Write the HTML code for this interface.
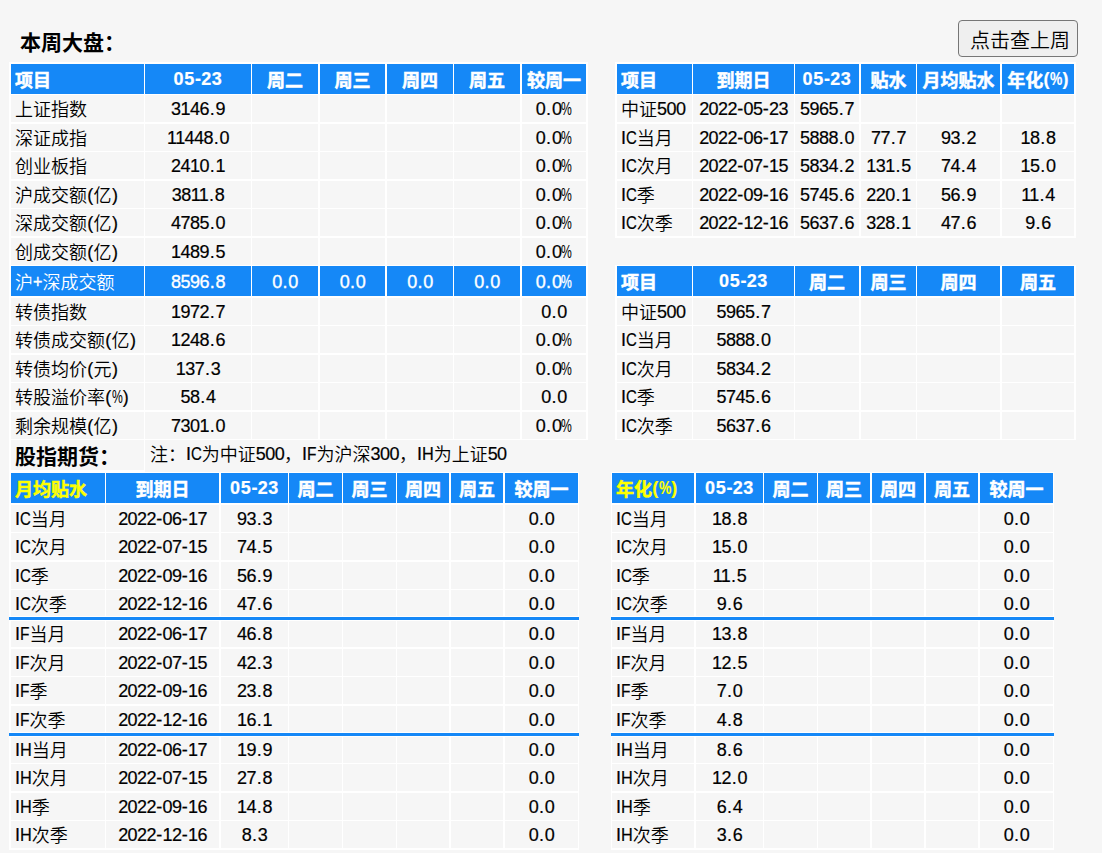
<!DOCTYPE html>
<html lang="zh-CN">
<head>
<meta charset="utf-8">
<title>本周大盘</title>
<style>
html,body{margin:0;padding:0;}
body{background:#f6f6f6;width:1102px;height:853px;position:relative;overflow:hidden;
 font-family:"Liberation Sans", "Noto Sans CJK SC", sans-serif;font-size:18px;color:#000;}
.w{position:absolute;background:#fff;}
.b{position:absolute;background:#1588f7;}
.c{position:absolute;background:#f6f6f6;text-align:center;white-space:nowrap;overflow:hidden;
 box-sizing:border-box;line-height:27px;padding-top:1px;}
.c.l{text-align:left;padding-left:4px;}
.c.u{padding-top:0;}
.c.la{padding-left:4px;}
.d,.x,.g{-webkit-text-stroke:0.2px currentColor;}
.c .xp{-webkit-text-stroke:0;}
.h{-webkit-text-stroke:0.5px currentColor;}
.h .d,.h .x,.h .g{-webkit-text-stroke:0.2px currentColor;}
.hl .d,.hl .x,.hl .g{-webkit-text-stroke:0.35px currentColor;}
.k{position:relative;top:1px;font-weight:350;}
.h .k,.t .k,.title .k{top:2px;font-weight:bold;}
.d{letter-spacing:-0.57px;}
.h .d{letter-spacing:0.53px;}
.x{display:inline-block;transform-origin:0 50%;letter-spacing:0;}
.xC{width:10.77px;transform:scaleX(0.828);}
.h .xC{width:11.01px;transform:scaleX(0.847);}
.xF{width:9.44px;transform:scaleX(0.859);}
.h .xF{width:10.50px;transform:scaleX(0.955);}
.xH{width:11.77px;transform:scaleX(0.905);}
.h .xH{width:12.30px;transform:scaleX(0.947);}
.xP{width:9.44px;transform:scaleX(0.898);}
.h .xP{width:10.55px;transform:scaleX(1.003);}
.xp{width:10.80px;transform:scaleX(0.675);}
.h .xp{width:12.32px;transform:scaleX(0.770);}
.g{letter-spacing:0;}
.gd{margin:0 0.80px;}
.gy{margin:0 0.30px;}
.c.h{background:#1588f7;color:#fff;font-weight:bold;line-height:30px;padding-top:0;}
.c.hl{background:#1588f7;color:#fff;line-height:30px;padding-top:1px;}
.c.y{color:#ffff00;}
.c.t{font-weight:bold;font-size:21px;line-height:30px;padding-left:4px;padding-top:0;}
.note{position:absolute;left:150px;top:439px;line-height:30px;white-space:nowrap;}
.title{position:absolute;left:20px;top:26px;font-weight:bold;font-size:21px;line-height:30px;white-space:nowrap;}
.btn{position:absolute;left:958px;top:20px;width:120px;height:37px;box-sizing:border-box;
 border:1px solid #767676;border-radius:4px;background:#efefef;color:#000;
 font-family:"Liberation Sans", "Noto Sans CJK SC", sans-serif;font-size:20px;line-height:35px;padding:0 0 0 11px;text-align:left;white-space:nowrap;margin:0;}
.btn .k{top:3px;}
</style>
</head>
<body>
<div class="title"><span class="k">本周大盘：</span></div>
<button class="btn" type="button"><span class="k">点击查上周</span></button>
<div class="w" style="left:9px;top:62px;width:579px;height:378px"></div>
<div class="w" style="left:615px;top:62px;width:461px;height:176px"></div>
<div class="w" style="left:615px;top:265px;width:461px;height:175px"></div>
<div class="w" style="left:9px;top:440px;width:136px;height:32px"></div>
<div class="w" style="left:9px;top:472px;width:570px;height:378px"></div>
<div class="w" style="left:611px;top:472px;width:443px;height:378px"></div>
<div class="c h l" style="left:11px;top:64px;width:133px;height:30px"><span class="k">项目</span></div>
<div class="c h" style="left:145px;top:64px;width:106px;height:30px"><span class="d">05</span><span class="g gy">-</span><span class="d">23</span></div>
<div class="c h" style="left:252px;top:64px;width:66px;height:30px"><span class="k">周二</span></div>
<div class="c h" style="left:320px;top:64px;width:65px;height:30px"><span class="k">周三</span></div>
<div class="c h" style="left:387px;top:64px;width:66px;height:30px"><span class="k">周四</span></div>
<div class="c h" style="left:454px;top:64px;width:66px;height:30px"><span class="k">周五</span></div>
<div class="c h" style="left:522px;top:64px;width:64px;height:30px"><span class="k">较周一</span></div>
<div class="c n l" style="left:11px;top:95px;width:133px;height:27px"><span class="k">上证指数</span></div>
<div class="c n" style="left:145px;top:95px;width:106px;height:27px"><span class="d">3146</span><span class="g gd">.</span><span class="d">9</span></div>
<div class="c n" style="left:252px;top:95px;width:66px;height:27px"></div>
<div class="c n" style="left:320px;top:95px;width:65px;height:27px"></div>
<div class="c n" style="left:387px;top:95px;width:66px;height:27px"></div>
<div class="c n" style="left:454px;top:95px;width:66px;height:27px"></div>
<div class="c n" style="left:522px;top:95px;width:64px;height:27px"><span class="d">0</span><span class="g gd">.</span><span class="d">0</span><span class="x xp">%</span></div>
<div class="c n l" style="left:11px;top:124px;width:133px;height:27px"><span class="k">深证成指</span></div>
<div class="c n" style="left:145px;top:124px;width:106px;height:27px"><span class="d">11448</span><span class="g gd">.</span><span class="d">0</span></div>
<div class="c n" style="left:252px;top:124px;width:66px;height:27px"></div>
<div class="c n" style="left:320px;top:124px;width:65px;height:27px"></div>
<div class="c n" style="left:387px;top:124px;width:66px;height:27px"></div>
<div class="c n" style="left:454px;top:124px;width:66px;height:27px"></div>
<div class="c n" style="left:522px;top:124px;width:64px;height:27px"><span class="d">0</span><span class="g gd">.</span><span class="d">0</span><span class="x xp">%</span></div>
<div class="c n l" style="left:11px;top:152px;width:133px;height:27px"><span class="k">创业板指</span></div>
<div class="c n" style="left:145px;top:152px;width:106px;height:27px"><span class="d">2410</span><span class="g gd">.</span><span class="d">1</span></div>
<div class="c n" style="left:252px;top:152px;width:66px;height:27px"></div>
<div class="c n" style="left:320px;top:152px;width:65px;height:27px"></div>
<div class="c n" style="left:387px;top:152px;width:66px;height:27px"></div>
<div class="c n" style="left:454px;top:152px;width:66px;height:27px"></div>
<div class="c n" style="left:522px;top:152px;width:64px;height:27px"><span class="d">0</span><span class="g gd">.</span><span class="d">0</span><span class="x xp">%</span></div>
<div class="c n l" style="left:11px;top:181px;width:133px;height:27px"><span class="k">沪成交额</span><span class="g gy">(</span><span class="k">亿</span><span class="g gy">)</span></div>
<div class="c n" style="left:145px;top:181px;width:106px;height:27px"><span class="d">3811</span><span class="g gd">.</span><span class="d">8</span></div>
<div class="c n" style="left:252px;top:181px;width:66px;height:27px"></div>
<div class="c n" style="left:320px;top:181px;width:65px;height:27px"></div>
<div class="c n" style="left:387px;top:181px;width:66px;height:27px"></div>
<div class="c n" style="left:454px;top:181px;width:66px;height:27px"></div>
<div class="c n" style="left:522px;top:181px;width:64px;height:27px"><span class="d">0</span><span class="g gd">.</span><span class="d">0</span><span class="x xp">%</span></div>
<div class="c n l" style="left:11px;top:209px;width:133px;height:27px"><span class="k">深成交额</span><span class="g gy">(</span><span class="k">亿</span><span class="g gy">)</span></div>
<div class="c n" style="left:145px;top:209px;width:106px;height:27px"><span class="d">4785</span><span class="g gd">.</span><span class="d">0</span></div>
<div class="c n" style="left:252px;top:209px;width:66px;height:27px"></div>
<div class="c n" style="left:320px;top:209px;width:65px;height:27px"></div>
<div class="c n" style="left:387px;top:209px;width:66px;height:27px"></div>
<div class="c n" style="left:454px;top:209px;width:66px;height:27px"></div>
<div class="c n" style="left:522px;top:209px;width:64px;height:27px"><span class="d">0</span><span class="g gd">.</span><span class="d">0</span><span class="x xp">%</span></div>
<div class="c n l" style="left:11px;top:238px;width:133px;height:27px"><span class="k">创成交额</span><span class="g gy">(</span><span class="k">亿</span><span class="g gy">)</span></div>
<div class="c n" style="left:145px;top:238px;width:106px;height:27px"><span class="d">1489</span><span class="g gd">.</span><span class="d">5</span></div>
<div class="c n" style="left:252px;top:238px;width:66px;height:27px"></div>
<div class="c n" style="left:320px;top:238px;width:65px;height:27px"></div>
<div class="c n" style="left:387px;top:238px;width:66px;height:27px"></div>
<div class="c n" style="left:454px;top:238px;width:66px;height:27px"></div>
<div class="c n" style="left:522px;top:238px;width:64px;height:27px"><span class="d">0</span><span class="g gd">.</span><span class="d">0</span><span class="x xp">%</span></div>
<div class="c hl l" style="left:11px;top:266px;width:133px;height:30px"><span class="k">沪</span><span class="x xP">+</span><span class="k">深成交额</span></div>
<div class="c hl" style="left:145px;top:266px;width:106px;height:30px"><span class="d">8596</span><span class="g gd">.</span><span class="d">8</span></div>
<div class="c hl" style="left:252px;top:266px;width:66px;height:30px"><span class="d">0</span><span class="g gd">.</span><span class="d">0</span></div>
<div class="c hl" style="left:320px;top:266px;width:65px;height:30px"><span class="d">0</span><span class="g gd">.</span><span class="d">0</span></div>
<div class="c hl" style="left:387px;top:266px;width:66px;height:30px"><span class="d">0</span><span class="g gd">.</span><span class="d">0</span></div>
<div class="c hl" style="left:454px;top:266px;width:66px;height:30px"><span class="d">0</span><span class="g gd">.</span><span class="d">0</span></div>
<div class="c hl" style="left:522px;top:266px;width:64px;height:30px"><span class="d">0</span><span class="g gd">.</span><span class="d">0</span><span class="x xp">%</span></div>
<div class="c n l" style="left:11px;top:298px;width:133px;height:27px"><span class="k">转债指数</span></div>
<div class="c n" style="left:145px;top:298px;width:106px;height:27px"><span class="d">1972</span><span class="g gd">.</span><span class="d">7</span></div>
<div class="c n" style="left:252px;top:298px;width:66px;height:27px"></div>
<div class="c n" style="left:320px;top:298px;width:65px;height:27px"></div>
<div class="c n" style="left:387px;top:298px;width:66px;height:27px"></div>
<div class="c n" style="left:454px;top:298px;width:66px;height:27px"></div>
<div class="c n" style="left:522px;top:298px;width:64px;height:27px"><span class="d">0</span><span class="g gd">.</span><span class="d">0</span></div>
<div class="c n l" style="left:11px;top:326px;width:133px;height:27px"><span class="k">转债成交额</span><span class="g gy">(</span><span class="k">亿</span><span class="g gy">)</span></div>
<div class="c n" style="left:145px;top:326px;width:106px;height:27px"><span class="d">1248</span><span class="g gd">.</span><span class="d">6</span></div>
<div class="c n" style="left:252px;top:326px;width:66px;height:27px"></div>
<div class="c n" style="left:320px;top:326px;width:65px;height:27px"></div>
<div class="c n" style="left:387px;top:326px;width:66px;height:27px"></div>
<div class="c n" style="left:454px;top:326px;width:66px;height:27px"></div>
<div class="c n" style="left:522px;top:326px;width:64px;height:27px"><span class="d">0</span><span class="g gd">.</span><span class="d">0</span><span class="x xp">%</span></div>
<div class="c n l" style="left:11px;top:355px;width:133px;height:27px"><span class="k">转债均价</span><span class="g gy">(</span><span class="k">元</span><span class="g gy">)</span></div>
<div class="c n" style="left:145px;top:355px;width:106px;height:27px"><span class="d">137</span><span class="g gd">.</span><span class="d">3</span></div>
<div class="c n" style="left:252px;top:355px;width:66px;height:27px"></div>
<div class="c n" style="left:320px;top:355px;width:65px;height:27px"></div>
<div class="c n" style="left:387px;top:355px;width:66px;height:27px"></div>
<div class="c n" style="left:454px;top:355px;width:66px;height:27px"></div>
<div class="c n" style="left:522px;top:355px;width:64px;height:27px"><span class="d">0</span><span class="g gd">.</span><span class="d">0</span><span class="x xp">%</span></div>
<div class="c n l" style="left:11px;top:383px;width:133px;height:27px"><span class="k">转股溢价率</span><span class="g gy">(</span><span class="x xp">%</span><span class="g gy">)</span></div>
<div class="c n" style="left:145px;top:383px;width:106px;height:27px"><span class="d">58</span><span class="g gd">.</span><span class="d">4</span></div>
<div class="c n" style="left:252px;top:383px;width:66px;height:27px"></div>
<div class="c n" style="left:320px;top:383px;width:65px;height:27px"></div>
<div class="c n" style="left:387px;top:383px;width:66px;height:27px"></div>
<div class="c n" style="left:454px;top:383px;width:66px;height:27px"></div>
<div class="c n" style="left:522px;top:383px;width:64px;height:27px"><span class="d">0</span><span class="g gd">.</span><span class="d">0</span></div>
<div class="c n l" style="left:11px;top:412px;width:133px;height:27px"><span class="k">剩余规模</span><span class="g gy">(</span><span class="k">亿</span><span class="g gy">)</span></div>
<div class="c n" style="left:145px;top:412px;width:106px;height:27px"><span class="d">7301</span><span class="g gd">.</span><span class="d">0</span></div>
<div class="c n" style="left:252px;top:412px;width:66px;height:27px"></div>
<div class="c n" style="left:320px;top:412px;width:65px;height:27px"></div>
<div class="c n" style="left:387px;top:412px;width:66px;height:27px"></div>
<div class="c n" style="left:454px;top:412px;width:66px;height:27px"></div>
<div class="c n" style="left:522px;top:412px;width:64px;height:27px"><span class="d">0</span><span class="g gd">.</span><span class="d">0</span><span class="x xp">%</span></div>
<div class="c t l" style="left:11px;top:440px;width:133px;height:30px"><span class="k">股指期货：</span></div>
<div class="note"><span class="k">注：</span><span class="g">I</span><span class="x xC">C</span><span class="k">为中证</span><span class="d">500</span><span class="k">，</span><span class="g">I</span><span class="x xF">F</span><span class="k">为沪深</span><span class="d">300</span><span class="k">，</span><span class="g">I</span><span class="x xH">H</span><span class="k">为上证</span><span class="d">50</span></div>
<div class="c h l" style="left:617px;top:64px;width:75px;height:30px"><span class="k">项目</span></div>
<div class="c h" style="left:693px;top:64px;width:101px;height:30px"><span class="k">到期日</span></div>
<div class="c h" style="left:795px;top:64px;width:64px;height:30px"><span class="d">05</span><span class="g gy">-</span><span class="d">23</span></div>
<div class="c h" style="left:861px;top:64px;width:55px;height:30px"><span class="k">贴水</span></div>
<div class="c h" style="left:917px;top:64px;width:83px;height:30px"><span class="k">月均贴水</span></div>
<div class="c h" style="left:1002px;top:64px;width:72px;height:30px"><span class="k">年化</span><span class="g gy">(</span><span class="x xp">%</span><span class="g gy">)</span></div>
<div class="c n l" style="left:617px;top:95px;width:75px;height:27px"><span class="k">中证</span><span class="d">500</span></div>
<div class="c n" style="left:693px;top:95px;width:101px;height:27px"><span class="d">2022</span><span class="g gy">-</span><span class="d">05</span><span class="g gy">-</span><span class="d">23</span></div>
<div class="c n" style="left:795px;top:95px;width:64px;height:27px"><span class="d">5965</span><span class="g gd">.</span><span class="d">7</span></div>
<div class="c n" style="left:861px;top:95px;width:55px;height:27px"></div>
<div class="c n" style="left:917px;top:95px;width:83px;height:27px"></div>
<div class="c n" style="left:1002px;top:95px;width:72px;height:27px"></div>
<div class="c n l la" style="left:617px;top:124px;width:75px;height:27px"><span class="g">I</span><span class="x xC">C</span><span class="k">当月</span></div>
<div class="c n" style="left:693px;top:124px;width:101px;height:27px"><span class="d">2022</span><span class="g gy">-</span><span class="d">06</span><span class="g gy">-</span><span class="d">17</span></div>
<div class="c n" style="left:795px;top:124px;width:64px;height:27px"><span class="d">5888</span><span class="g gd">.</span><span class="d">0</span></div>
<div class="c n" style="left:861px;top:124px;width:55px;height:27px"><span class="d">77</span><span class="g gd">.</span><span class="d">7</span></div>
<div class="c n" style="left:917px;top:124px;width:83px;height:27px"><span class="d">93</span><span class="g gd">.</span><span class="d">2</span></div>
<div class="c n" style="left:1002px;top:124px;width:72px;height:27px"><span class="d">18</span><span class="g gd">.</span><span class="d">8</span></div>
<div class="c n l la" style="left:617px;top:152px;width:75px;height:27px"><span class="g">I</span><span class="x xC">C</span><span class="k">次月</span></div>
<div class="c n" style="left:693px;top:152px;width:101px;height:27px"><span class="d">2022</span><span class="g gy">-</span><span class="d">07</span><span class="g gy">-</span><span class="d">15</span></div>
<div class="c n" style="left:795px;top:152px;width:64px;height:27px"><span class="d">5834</span><span class="g gd">.</span><span class="d">2</span></div>
<div class="c n" style="left:861px;top:152px;width:55px;height:27px"><span class="d">131</span><span class="g gd">.</span><span class="d">5</span></div>
<div class="c n" style="left:917px;top:152px;width:83px;height:27px"><span class="d">74</span><span class="g gd">.</span><span class="d">4</span></div>
<div class="c n" style="left:1002px;top:152px;width:72px;height:27px"><span class="d">15</span><span class="g gd">.</span><span class="d">0</span></div>
<div class="c n l la" style="left:617px;top:181px;width:75px;height:27px"><span class="g">I</span><span class="x xC">C</span><span class="k">季</span></div>
<div class="c n" style="left:693px;top:181px;width:101px;height:27px"><span class="d">2022</span><span class="g gy">-</span><span class="d">09</span><span class="g gy">-</span><span class="d">16</span></div>
<div class="c n" style="left:795px;top:181px;width:64px;height:27px"><span class="d">5745</span><span class="g gd">.</span><span class="d">6</span></div>
<div class="c n" style="left:861px;top:181px;width:55px;height:27px"><span class="d">220</span><span class="g gd">.</span><span class="d">1</span></div>
<div class="c n" style="left:917px;top:181px;width:83px;height:27px"><span class="d">56</span><span class="g gd">.</span><span class="d">9</span></div>
<div class="c n" style="left:1002px;top:181px;width:72px;height:27px"><span class="d">11</span><span class="g gd">.</span><span class="d">4</span></div>
<div class="c n l la" style="left:617px;top:209px;width:75px;height:27px"><span class="g">I</span><span class="x xC">C</span><span class="k">次季</span></div>
<div class="c n" style="left:693px;top:209px;width:101px;height:27px"><span class="d">2022</span><span class="g gy">-</span><span class="d">12</span><span class="g gy">-</span><span class="d">16</span></div>
<div class="c n" style="left:795px;top:209px;width:64px;height:27px"><span class="d">5637</span><span class="g gd">.</span><span class="d">6</span></div>
<div class="c n" style="left:861px;top:209px;width:55px;height:27px"><span class="d">328</span><span class="g gd">.</span><span class="d">1</span></div>
<div class="c n" style="left:917px;top:209px;width:83px;height:27px"><span class="d">47</span><span class="g gd">.</span><span class="d">6</span></div>
<div class="c n" style="left:1002px;top:209px;width:72px;height:27px"><span class="d">9</span><span class="g gd">.</span><span class="d">6</span></div>
<div class="c h l" style="left:617px;top:266px;width:75px;height:30px"><span class="k">项目</span></div>
<div class="c h" style="left:693px;top:266px;width:101px;height:30px"><span class="d">05</span><span class="g gy">-</span><span class="d">23</span></div>
<div class="c h" style="left:795px;top:266px;width:64px;height:30px"><span class="k">周二</span></div>
<div class="c h" style="left:861px;top:266px;width:55px;height:30px"><span class="k">周三</span></div>
<div class="c h" style="left:917px;top:266px;width:83px;height:30px"><span class="k">周四</span></div>
<div class="c h" style="left:1002px;top:266px;width:72px;height:30px"><span class="k">周五</span></div>
<div class="c n l" style="left:617px;top:298px;width:75px;height:27px"><span class="k">中证</span><span class="d">500</span></div>
<div class="c n" style="left:693px;top:298px;width:101px;height:27px"><span class="d">5965</span><span class="g gd">.</span><span class="d">7</span></div>
<div class="c n" style="left:795px;top:298px;width:64px;height:27px"></div>
<div class="c n" style="left:861px;top:298px;width:55px;height:27px"></div>
<div class="c n" style="left:917px;top:298px;width:83px;height:27px"></div>
<div class="c n" style="left:1002px;top:298px;width:72px;height:27px"></div>
<div class="c n l la" style="left:617px;top:326px;width:75px;height:27px"><span class="g">I</span><span class="x xC">C</span><span class="k">当月</span></div>
<div class="c n" style="left:693px;top:326px;width:101px;height:27px"><span class="d">5888</span><span class="g gd">.</span><span class="d">0</span></div>
<div class="c n" style="left:795px;top:326px;width:64px;height:27px"></div>
<div class="c n" style="left:861px;top:326px;width:55px;height:27px"></div>
<div class="c n" style="left:917px;top:326px;width:83px;height:27px"></div>
<div class="c n" style="left:1002px;top:326px;width:72px;height:27px"></div>
<div class="c n l la" style="left:617px;top:355px;width:75px;height:27px"><span class="g">I</span><span class="x xC">C</span><span class="k">次月</span></div>
<div class="c n" style="left:693px;top:355px;width:101px;height:27px"><span class="d">5834</span><span class="g gd">.</span><span class="d">2</span></div>
<div class="c n" style="left:795px;top:355px;width:64px;height:27px"></div>
<div class="c n" style="left:861px;top:355px;width:55px;height:27px"></div>
<div class="c n" style="left:917px;top:355px;width:83px;height:27px"></div>
<div class="c n" style="left:1002px;top:355px;width:72px;height:27px"></div>
<div class="c n l la" style="left:617px;top:383px;width:75px;height:27px"><span class="g">I</span><span class="x xC">C</span><span class="k">季</span></div>
<div class="c n" style="left:693px;top:383px;width:101px;height:27px"><span class="d">5745</span><span class="g gd">.</span><span class="d">6</span></div>
<div class="c n" style="left:795px;top:383px;width:64px;height:27px"></div>
<div class="c n" style="left:861px;top:383px;width:55px;height:27px"></div>
<div class="c n" style="left:917px;top:383px;width:83px;height:27px"></div>
<div class="c n" style="left:1002px;top:383px;width:72px;height:27px"></div>
<div class="c n l la" style="left:617px;top:412px;width:75px;height:27px"><span class="g">I</span><span class="x xC">C</span><span class="k">次季</span></div>
<div class="c n" style="left:693px;top:412px;width:101px;height:27px"><span class="d">5637</span><span class="g gd">.</span><span class="d">6</span></div>
<div class="c n" style="left:795px;top:412px;width:64px;height:27px"></div>
<div class="c n" style="left:861px;top:412px;width:55px;height:27px"></div>
<div class="c n" style="left:917px;top:412px;width:83px;height:27px"></div>
<div class="c n" style="left:1002px;top:412px;width:72px;height:27px"></div>
<div class="c h l y" style="left:11px;top:473px;width:94px;height:30px"><span class="k">月均贴水</span></div>
<div class="c h" style="left:106px;top:473px;width:113px;height:30px"><span class="k">到期日</span></div>
<div class="c h" style="left:221px;top:473px;width:67px;height:30px"><span class="d">05</span><span class="g gy">-</span><span class="d">23</span></div>
<div class="c h" style="left:289px;top:473px;width:53px;height:30px"><span class="k">周二</span></div>
<div class="c h" style="left:343px;top:473px;width:53px;height:30px"><span class="k">周三</span></div>
<div class="c h" style="left:397px;top:473px;width:52px;height:30px"><span class="k">周四</span></div>
<div class="c h" style="left:451px;top:473px;width:52px;height:30px"><span class="k">周五</span></div>
<div class="c h" style="left:505px;top:473px;width:73px;height:30px"><span class="k">较周一</span></div>
<div class="c n l la" style="left:11px;top:505px;width:94px;height:27px"><span class="g">I</span><span class="x xC">C</span><span class="k">当月</span></div>
<div class="c n" style="left:106px;top:505px;width:113px;height:27px"><span class="d">2022</span><span class="g gy">-</span><span class="d">06</span><span class="g gy">-</span><span class="d">17</span></div>
<div class="c n" style="left:221px;top:505px;width:67px;height:27px"><span class="d">93</span><span class="g gd">.</span><span class="d">3</span></div>
<div class="c n" style="left:289px;top:505px;width:53px;height:27px"></div>
<div class="c n" style="left:343px;top:505px;width:53px;height:27px"></div>
<div class="c n" style="left:397px;top:505px;width:52px;height:27px"></div>
<div class="c n" style="left:451px;top:505px;width:52px;height:27px"></div>
<div class="c n" style="left:505px;top:505px;width:73px;height:27px"><span class="d">0</span><span class="g gd">.</span><span class="d">0</span></div>
<div class="c n l la" style="left:11px;top:533px;width:94px;height:27px"><span class="g">I</span><span class="x xC">C</span><span class="k">次月</span></div>
<div class="c n" style="left:106px;top:533px;width:113px;height:27px"><span class="d">2022</span><span class="g gy">-</span><span class="d">07</span><span class="g gy">-</span><span class="d">15</span></div>
<div class="c n" style="left:221px;top:533px;width:67px;height:27px"><span class="d">74</span><span class="g gd">.</span><span class="d">5</span></div>
<div class="c n" style="left:289px;top:533px;width:53px;height:27px"></div>
<div class="c n" style="left:343px;top:533px;width:53px;height:27px"></div>
<div class="c n" style="left:397px;top:533px;width:52px;height:27px"></div>
<div class="c n" style="left:451px;top:533px;width:52px;height:27px"></div>
<div class="c n" style="left:505px;top:533px;width:73px;height:27px"><span class="d">0</span><span class="g gd">.</span><span class="d">0</span></div>
<div class="c n l la" style="left:11px;top:562px;width:94px;height:27px"><span class="g">I</span><span class="x xC">C</span><span class="k">季</span></div>
<div class="c n" style="left:106px;top:562px;width:113px;height:27px"><span class="d">2022</span><span class="g gy">-</span><span class="d">09</span><span class="g gy">-</span><span class="d">16</span></div>
<div class="c n" style="left:221px;top:562px;width:67px;height:27px"><span class="d">56</span><span class="g gd">.</span><span class="d">9</span></div>
<div class="c n" style="left:289px;top:562px;width:53px;height:27px"></div>
<div class="c n" style="left:343px;top:562px;width:53px;height:27px"></div>
<div class="c n" style="left:397px;top:562px;width:52px;height:27px"></div>
<div class="c n" style="left:451px;top:562px;width:52px;height:27px"></div>
<div class="c n" style="left:505px;top:562px;width:73px;height:27px"><span class="d">0</span><span class="g gd">.</span><span class="d">0</span></div>
<div class="c n l la" style="left:11px;top:590px;width:94px;height:26px"><span class="g">I</span><span class="x xC">C</span><span class="k">次季</span></div>
<div class="c n" style="left:106px;top:590px;width:113px;height:26px"><span class="d">2022</span><span class="g gy">-</span><span class="d">12</span><span class="g gy">-</span><span class="d">16</span></div>
<div class="c n" style="left:221px;top:590px;width:67px;height:26px"><span class="d">47</span><span class="g gd">.</span><span class="d">6</span></div>
<div class="c n" style="left:289px;top:590px;width:53px;height:26px"></div>
<div class="c n" style="left:343px;top:590px;width:53px;height:26px"></div>
<div class="c n" style="left:397px;top:590px;width:52px;height:26px"></div>
<div class="c n" style="left:451px;top:590px;width:52px;height:26px"></div>
<div class="c n" style="left:505px;top:590px;width:73px;height:26px"><span class="d">0</span><span class="g gd">.</span><span class="d">0</span></div>
<div class="c n u l la" style="left:11px;top:621px;width:94px;height:26px"><span class="g">I</span><span class="x xF">F</span><span class="k">当月</span></div>
<div class="c n u" style="left:106px;top:621px;width:113px;height:26px"><span class="d">2022</span><span class="g gy">-</span><span class="d">06</span><span class="g gy">-</span><span class="d">17</span></div>
<div class="c n u" style="left:221px;top:621px;width:67px;height:26px"><span class="d">46</span><span class="g gd">.</span><span class="d">8</span></div>
<div class="c n u" style="left:289px;top:621px;width:53px;height:26px"></div>
<div class="c n u" style="left:343px;top:621px;width:53px;height:26px"></div>
<div class="c n u" style="left:397px;top:621px;width:52px;height:26px"></div>
<div class="c n u" style="left:451px;top:621px;width:52px;height:26px"></div>
<div class="c n u" style="left:505px;top:621px;width:73px;height:26px"><span class="d">0</span><span class="g gd">.</span><span class="d">0</span></div>
<div class="c n l la" style="left:11px;top:649px;width:94px;height:27px"><span class="g">I</span><span class="x xF">F</span><span class="k">次月</span></div>
<div class="c n" style="left:106px;top:649px;width:113px;height:27px"><span class="d">2022</span><span class="g gy">-</span><span class="d">07</span><span class="g gy">-</span><span class="d">15</span></div>
<div class="c n" style="left:221px;top:649px;width:67px;height:27px"><span class="d">42</span><span class="g gd">.</span><span class="d">3</span></div>
<div class="c n" style="left:289px;top:649px;width:53px;height:27px"></div>
<div class="c n" style="left:343px;top:649px;width:53px;height:27px"></div>
<div class="c n" style="left:397px;top:649px;width:52px;height:27px"></div>
<div class="c n" style="left:451px;top:649px;width:52px;height:27px"></div>
<div class="c n" style="left:505px;top:649px;width:73px;height:27px"><span class="d">0</span><span class="g gd">.</span><span class="d">0</span></div>
<div class="c n l la" style="left:11px;top:677px;width:94px;height:27px"><span class="g">I</span><span class="x xF">F</span><span class="k">季</span></div>
<div class="c n" style="left:106px;top:677px;width:113px;height:27px"><span class="d">2022</span><span class="g gy">-</span><span class="d">09</span><span class="g gy">-</span><span class="d">16</span></div>
<div class="c n" style="left:221px;top:677px;width:67px;height:27px"><span class="d">23</span><span class="g gd">.</span><span class="d">8</span></div>
<div class="c n" style="left:289px;top:677px;width:53px;height:27px"></div>
<div class="c n" style="left:343px;top:677px;width:53px;height:27px"></div>
<div class="c n" style="left:397px;top:677px;width:52px;height:27px"></div>
<div class="c n" style="left:451px;top:677px;width:52px;height:27px"></div>
<div class="c n" style="left:505px;top:677px;width:73px;height:27px"><span class="d">0</span><span class="g gd">.</span><span class="d">0</span></div>
<div class="c n l la" style="left:11px;top:706px;width:94px;height:26px"><span class="g">I</span><span class="x xF">F</span><span class="k">次季</span></div>
<div class="c n" style="left:106px;top:706px;width:113px;height:26px"><span class="d">2022</span><span class="g gy">-</span><span class="d">12</span><span class="g gy">-</span><span class="d">16</span></div>
<div class="c n" style="left:221px;top:706px;width:67px;height:26px"><span class="d">16</span><span class="g gd">.</span><span class="d">1</span></div>
<div class="c n" style="left:289px;top:706px;width:53px;height:26px"></div>
<div class="c n" style="left:343px;top:706px;width:53px;height:26px"></div>
<div class="c n" style="left:397px;top:706px;width:52px;height:26px"></div>
<div class="c n" style="left:451px;top:706px;width:52px;height:26px"></div>
<div class="c n" style="left:505px;top:706px;width:73px;height:26px"><span class="d">0</span><span class="g gd">.</span><span class="d">0</span></div>
<div class="c n u l la" style="left:11px;top:737px;width:94px;height:26px"><span class="g">I</span><span class="x xH">H</span><span class="k">当月</span></div>
<div class="c n u" style="left:106px;top:737px;width:113px;height:26px"><span class="d">2022</span><span class="g gy">-</span><span class="d">06</span><span class="g gy">-</span><span class="d">17</span></div>
<div class="c n u" style="left:221px;top:737px;width:67px;height:26px"><span class="d">19</span><span class="g gd">.</span><span class="d">9</span></div>
<div class="c n u" style="left:289px;top:737px;width:53px;height:26px"></div>
<div class="c n u" style="left:343px;top:737px;width:53px;height:26px"></div>
<div class="c n u" style="left:397px;top:737px;width:52px;height:26px"></div>
<div class="c n u" style="left:451px;top:737px;width:52px;height:26px"></div>
<div class="c n u" style="left:505px;top:737px;width:73px;height:26px"><span class="d">0</span><span class="g gd">.</span><span class="d">0</span></div>
<div class="c n l la" style="left:11px;top:764px;width:94px;height:27px"><span class="g">I</span><span class="x xH">H</span><span class="k">次月</span></div>
<div class="c n" style="left:106px;top:764px;width:113px;height:27px"><span class="d">2022</span><span class="g gy">-</span><span class="d">07</span><span class="g gy">-</span><span class="d">15</span></div>
<div class="c n" style="left:221px;top:764px;width:67px;height:27px"><span class="d">27</span><span class="g gd">.</span><span class="d">8</span></div>
<div class="c n" style="left:289px;top:764px;width:53px;height:27px"></div>
<div class="c n" style="left:343px;top:764px;width:53px;height:27px"></div>
<div class="c n" style="left:397px;top:764px;width:52px;height:27px"></div>
<div class="c n" style="left:451px;top:764px;width:52px;height:27px"></div>
<div class="c n" style="left:505px;top:764px;width:73px;height:27px"><span class="d">0</span><span class="g gd">.</span><span class="d">0</span></div>
<div class="c n l la" style="left:11px;top:793px;width:94px;height:27px"><span class="g">I</span><span class="x xH">H</span><span class="k">季</span></div>
<div class="c n" style="left:106px;top:793px;width:113px;height:27px"><span class="d">2022</span><span class="g gy">-</span><span class="d">09</span><span class="g gy">-</span><span class="d">16</span></div>
<div class="c n" style="left:221px;top:793px;width:67px;height:27px"><span class="d">14</span><span class="g gd">.</span><span class="d">8</span></div>
<div class="c n" style="left:289px;top:793px;width:53px;height:27px"></div>
<div class="c n" style="left:343px;top:793px;width:53px;height:27px"></div>
<div class="c n" style="left:397px;top:793px;width:52px;height:27px"></div>
<div class="c n" style="left:451px;top:793px;width:52px;height:27px"></div>
<div class="c n" style="left:505px;top:793px;width:73px;height:27px"><span class="d">0</span><span class="g gd">.</span><span class="d">0</span></div>
<div class="c n l la" style="left:11px;top:821px;width:94px;height:27px"><span class="g">I</span><span class="x xH">H</span><span class="k">次季</span></div>
<div class="c n" style="left:106px;top:821px;width:113px;height:27px"><span class="d">2022</span><span class="g gy">-</span><span class="d">12</span><span class="g gy">-</span><span class="d">16</span></div>
<div class="c n" style="left:221px;top:821px;width:67px;height:27px"><span class="d">8</span><span class="g gd">.</span><span class="d">3</span></div>
<div class="c n" style="left:289px;top:821px;width:53px;height:27px"></div>
<div class="c n" style="left:343px;top:821px;width:53px;height:27px"></div>
<div class="c n" style="left:397px;top:821px;width:52px;height:27px"></div>
<div class="c n" style="left:451px;top:821px;width:52px;height:27px"></div>
<div class="c n" style="left:505px;top:821px;width:73px;height:27px"><span class="d">0</span><span class="g gd">.</span><span class="d">0</span></div>
<div class="c h l y" style="left:612px;top:473px;width:82px;height:30px"><span class="k">年化</span><span class="g gy">(</span><span class="x xp">%</span><span class="g gy">)</span></div>
<div class="c h" style="left:696px;top:473px;width:67px;height:30px"><span class="d">05</span><span class="g gy">-</span><span class="d">23</span></div>
<div class="c h" style="left:764px;top:473px;width:53px;height:30px"><span class="k">周二</span></div>
<div class="c h" style="left:818px;top:473px;width:52px;height:30px"><span class="k">周三</span></div>
<div class="c h" style="left:872px;top:473px;width:52px;height:30px"><span class="k">周四</span></div>
<div class="c h" style="left:926px;top:473px;width:52px;height:30px"><span class="k">周五</span></div>
<div class="c h" style="left:980px;top:473px;width:73px;height:30px"><span class="k">较周一</span></div>
<div class="c n l la" style="left:612px;top:505px;width:82px;height:27px"><span class="g">I</span><span class="x xC">C</span><span class="k">当月</span></div>
<div class="c n" style="left:696px;top:505px;width:67px;height:27px"><span class="d">18</span><span class="g gd">.</span><span class="d">8</span></div>
<div class="c n" style="left:764px;top:505px;width:53px;height:27px"></div>
<div class="c n" style="left:818px;top:505px;width:52px;height:27px"></div>
<div class="c n" style="left:872px;top:505px;width:52px;height:27px"></div>
<div class="c n" style="left:926px;top:505px;width:52px;height:27px"></div>
<div class="c n" style="left:980px;top:505px;width:73px;height:27px"><span class="d">0</span><span class="g gd">.</span><span class="d">0</span></div>
<div class="c n l la" style="left:612px;top:533px;width:82px;height:27px"><span class="g">I</span><span class="x xC">C</span><span class="k">次月</span></div>
<div class="c n" style="left:696px;top:533px;width:67px;height:27px"><span class="d">15</span><span class="g gd">.</span><span class="d">0</span></div>
<div class="c n" style="left:764px;top:533px;width:53px;height:27px"></div>
<div class="c n" style="left:818px;top:533px;width:52px;height:27px"></div>
<div class="c n" style="left:872px;top:533px;width:52px;height:27px"></div>
<div class="c n" style="left:926px;top:533px;width:52px;height:27px"></div>
<div class="c n" style="left:980px;top:533px;width:73px;height:27px"><span class="d">0</span><span class="g gd">.</span><span class="d">0</span></div>
<div class="c n l la" style="left:612px;top:562px;width:82px;height:27px"><span class="g">I</span><span class="x xC">C</span><span class="k">季</span></div>
<div class="c n" style="left:696px;top:562px;width:67px;height:27px"><span class="d">11</span><span class="g gd">.</span><span class="d">5</span></div>
<div class="c n" style="left:764px;top:562px;width:53px;height:27px"></div>
<div class="c n" style="left:818px;top:562px;width:52px;height:27px"></div>
<div class="c n" style="left:872px;top:562px;width:52px;height:27px"></div>
<div class="c n" style="left:926px;top:562px;width:52px;height:27px"></div>
<div class="c n" style="left:980px;top:562px;width:73px;height:27px"><span class="d">0</span><span class="g gd">.</span><span class="d">0</span></div>
<div class="c n l la" style="left:612px;top:590px;width:82px;height:26px"><span class="g">I</span><span class="x xC">C</span><span class="k">次季</span></div>
<div class="c n" style="left:696px;top:590px;width:67px;height:26px"><span class="d">9</span><span class="g gd">.</span><span class="d">6</span></div>
<div class="c n" style="left:764px;top:590px;width:53px;height:26px"></div>
<div class="c n" style="left:818px;top:590px;width:52px;height:26px"></div>
<div class="c n" style="left:872px;top:590px;width:52px;height:26px"></div>
<div class="c n" style="left:926px;top:590px;width:52px;height:26px"></div>
<div class="c n" style="left:980px;top:590px;width:73px;height:26px"><span class="d">0</span><span class="g gd">.</span><span class="d">0</span></div>
<div class="c n u l la" style="left:612px;top:621px;width:82px;height:26px"><span class="g">I</span><span class="x xF">F</span><span class="k">当月</span></div>
<div class="c n u" style="left:696px;top:621px;width:67px;height:26px"><span class="d">13</span><span class="g gd">.</span><span class="d">8</span></div>
<div class="c n u" style="left:764px;top:621px;width:53px;height:26px"></div>
<div class="c n u" style="left:818px;top:621px;width:52px;height:26px"></div>
<div class="c n u" style="left:872px;top:621px;width:52px;height:26px"></div>
<div class="c n u" style="left:926px;top:621px;width:52px;height:26px"></div>
<div class="c n u" style="left:980px;top:621px;width:73px;height:26px"><span class="d">0</span><span class="g gd">.</span><span class="d">0</span></div>
<div class="c n l la" style="left:612px;top:649px;width:82px;height:27px"><span class="g">I</span><span class="x xF">F</span><span class="k">次月</span></div>
<div class="c n" style="left:696px;top:649px;width:67px;height:27px"><span class="d">12</span><span class="g gd">.</span><span class="d">5</span></div>
<div class="c n" style="left:764px;top:649px;width:53px;height:27px"></div>
<div class="c n" style="left:818px;top:649px;width:52px;height:27px"></div>
<div class="c n" style="left:872px;top:649px;width:52px;height:27px"></div>
<div class="c n" style="left:926px;top:649px;width:52px;height:27px"></div>
<div class="c n" style="left:980px;top:649px;width:73px;height:27px"><span class="d">0</span><span class="g gd">.</span><span class="d">0</span></div>
<div class="c n l la" style="left:612px;top:677px;width:82px;height:27px"><span class="g">I</span><span class="x xF">F</span><span class="k">季</span></div>
<div class="c n" style="left:696px;top:677px;width:67px;height:27px"><span class="d">7</span><span class="g gd">.</span><span class="d">0</span></div>
<div class="c n" style="left:764px;top:677px;width:53px;height:27px"></div>
<div class="c n" style="left:818px;top:677px;width:52px;height:27px"></div>
<div class="c n" style="left:872px;top:677px;width:52px;height:27px"></div>
<div class="c n" style="left:926px;top:677px;width:52px;height:27px"></div>
<div class="c n" style="left:980px;top:677px;width:73px;height:27px"><span class="d">0</span><span class="g gd">.</span><span class="d">0</span></div>
<div class="c n l la" style="left:612px;top:706px;width:82px;height:26px"><span class="g">I</span><span class="x xF">F</span><span class="k">次季</span></div>
<div class="c n" style="left:696px;top:706px;width:67px;height:26px"><span class="d">4</span><span class="g gd">.</span><span class="d">8</span></div>
<div class="c n" style="left:764px;top:706px;width:53px;height:26px"></div>
<div class="c n" style="left:818px;top:706px;width:52px;height:26px"></div>
<div class="c n" style="left:872px;top:706px;width:52px;height:26px"></div>
<div class="c n" style="left:926px;top:706px;width:52px;height:26px"></div>
<div class="c n" style="left:980px;top:706px;width:73px;height:26px"><span class="d">0</span><span class="g gd">.</span><span class="d">0</span></div>
<div class="c n u l la" style="left:612px;top:737px;width:82px;height:26px"><span class="g">I</span><span class="x xH">H</span><span class="k">当月</span></div>
<div class="c n u" style="left:696px;top:737px;width:67px;height:26px"><span class="d">8</span><span class="g gd">.</span><span class="d">6</span></div>
<div class="c n u" style="left:764px;top:737px;width:53px;height:26px"></div>
<div class="c n u" style="left:818px;top:737px;width:52px;height:26px"></div>
<div class="c n u" style="left:872px;top:737px;width:52px;height:26px"></div>
<div class="c n u" style="left:926px;top:737px;width:52px;height:26px"></div>
<div class="c n u" style="left:980px;top:737px;width:73px;height:26px"><span class="d">0</span><span class="g gd">.</span><span class="d">0</span></div>
<div class="c n l la" style="left:612px;top:764px;width:82px;height:27px"><span class="g">I</span><span class="x xH">H</span><span class="k">次月</span></div>
<div class="c n" style="left:696px;top:764px;width:67px;height:27px"><span class="d">12</span><span class="g gd">.</span><span class="d">0</span></div>
<div class="c n" style="left:764px;top:764px;width:53px;height:27px"></div>
<div class="c n" style="left:818px;top:764px;width:52px;height:27px"></div>
<div class="c n" style="left:872px;top:764px;width:52px;height:27px"></div>
<div class="c n" style="left:926px;top:764px;width:52px;height:27px"></div>
<div class="c n" style="left:980px;top:764px;width:73px;height:27px"><span class="d">0</span><span class="g gd">.</span><span class="d">0</span></div>
<div class="c n l la" style="left:612px;top:793px;width:82px;height:27px"><span class="g">I</span><span class="x xH">H</span><span class="k">季</span></div>
<div class="c n" style="left:696px;top:793px;width:67px;height:27px"><span class="d">6</span><span class="g gd">.</span><span class="d">4</span></div>
<div class="c n" style="left:764px;top:793px;width:53px;height:27px"></div>
<div class="c n" style="left:818px;top:793px;width:52px;height:27px"></div>
<div class="c n" style="left:872px;top:793px;width:52px;height:27px"></div>
<div class="c n" style="left:926px;top:793px;width:52px;height:27px"></div>
<div class="c n" style="left:980px;top:793px;width:73px;height:27px"><span class="d">0</span><span class="g gd">.</span><span class="d">0</span></div>
<div class="c n l la" style="left:612px;top:821px;width:82px;height:27px"><span class="g">I</span><span class="x xH">H</span><span class="k">次季</span></div>
<div class="c n" style="left:696px;top:821px;width:67px;height:27px"><span class="d">3</span><span class="g gd">.</span><span class="d">6</span></div>
<div class="c n" style="left:764px;top:821px;width:53px;height:27px"></div>
<div class="c n" style="left:818px;top:821px;width:52px;height:27px"></div>
<div class="c n" style="left:872px;top:821px;width:52px;height:27px"></div>
<div class="c n" style="left:926px;top:821px;width:52px;height:27px"></div>
<div class="c n" style="left:980px;top:821px;width:73px;height:27px"><span class="d">0</span><span class="g gd">.</span><span class="d">0</span></div>
<div class="b" style="left:9px;top:617px;width:570px;height:3px"></div>
<div class="b" style="left:9px;top:733px;width:570px;height:3px"></div>
<div class="b" style="left:611px;top:617px;width:443px;height:3px"></div>
<div class="b" style="left:611px;top:733px;width:443px;height:3px"></div>
</body>
</html>
